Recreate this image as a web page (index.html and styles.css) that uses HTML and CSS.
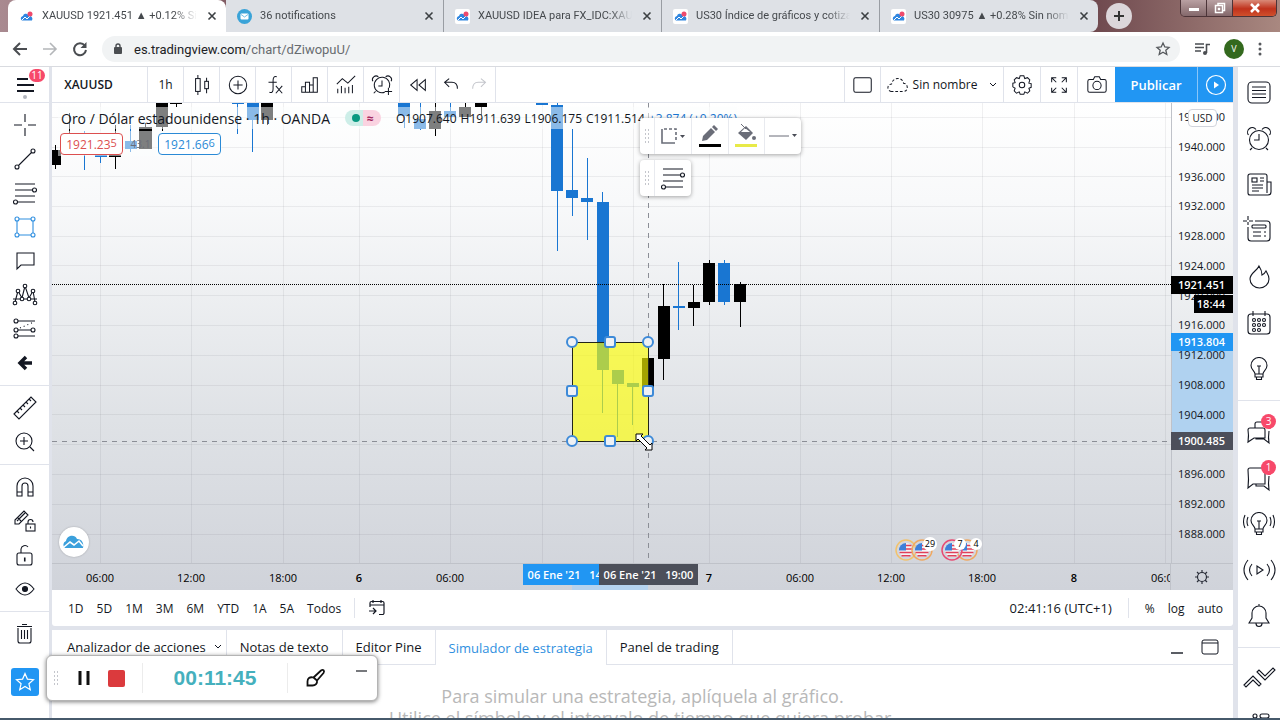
FILE: index.html
```html
<!DOCTYPE html>
<html lang="es">
<head>
    <meta charset="utf-8">
    <title>XAUUSD 1921.451 ▲ +0.12% Sin nombre</title>
    <link rel="stylesheet" href="styles.css">
</head>
<body>
    <!-- shared icons -->
    <svg class="defs" aria-hidden="true">
        <symbol id="tv" viewBox="0 0 15 15">
            <rect width="15" height="15" rx="2" fill="#fff"/>
            <path d="M2 10.500a2.500 2.500 0 0 1 2-3.500 3 3 0 0 1 5-1.500l1 1.500a3 3 0 0 1 3 4.500H3z" fill="#2f86e0"/>
            <path d="M3 11l3-3 2 2 3-3" fill="none" stroke="#fff"/>
            <circle cx="11" cy="5" r="2.500" fill="#ee4a6c"/>
        </symbol>
        <symbol id="close" viewBox="0 0 10 10"><path d="M1.500 1.500l7 7M8.500 1.500l-7 7" stroke="#3c4043" stroke-width="1.600"/></symbol>
        <symbol id="fib" viewBox="0 0 24 24">
            <path d="M2 3h20M2 9h18M2 15h20M4 21h18"/><circle cx="21.500" cy="9" r="2" fill="#fff"/><circle cx="2.500" cy="21" r="2" fill="#fff"/>
        </symbol>
        <symbol id="bulb" viewBox="0 0 24 24">
            <path d="M8 17c0-3-4-4-4-8.500a8 8 0 0 1 16 0c0 4.500-4 5.500-4 8.500zM8 17v3h8v-3M9.500 20v2.500h5V20M10 9h4M12 9v8"/>
        </symbol>
        <symbol id="flag" viewBox="0 0 20 20">
            <circle cx="10" cy="10" r="7" fill="#f4f4f6"/>
            <path d="M10 5.500h5.500M10 9h7M3.500 12.500h13M5.500 15.800h9" stroke="#e0405a" stroke-width="1.600"/>
            <path d="M10 3v7.500H3A7 7 0 0 1 10 3z" fill="#3e7fd8"/>
        </symbol>
    </svg>

    <div class="tabstrip">
        <div class="tab tab-active">
            <svg class="favicon"><use href="#tv"/></svg>
            <span class="tab-title">XAUUSD 1921.451 ▲ +0.12% Sin nombre</span>
            <button class="tab-close" aria-label="Cerrar"><svg width="10" height="10"><use href="#close"/></svg></button>
        </div>
        <div class="tab">
            <svg class="favicon" viewBox="0 0 15 15"><circle cx="7.500" cy="7.500" r="7.500" fill="#3aa3d8"/><rect x="3.500" y="4.500" width="8" height="6" rx="1" fill="#fff"/><path d="M4 5.500l3.500 2.500L11 5.500" fill="none" stroke="#3aa3d8" stroke-width=".7"/></svg>
            <span class="tab-title">36 notifications</span>
            <button class="tab-close" aria-label="Cerrar"><svg width="10" height="10"><use href="#close"/></svg></button>
        </div>
        <div class="tab">
            <svg class="favicon"><use href="#tv"/></svg>
            <span class="tab-title">XAUUSD IDEA para FX_IDC:XAUUSD</span>
            <button class="tab-close" aria-label="Cerrar"><svg width="10" height="10"><use href="#close"/></svg></button>
        </div>
        <div class="tab">
            <svg class="favicon"><use href="#tv"/></svg>
            <span class="tab-title">US30 Índice de gráficos y cotizaciones</span>
            <button class="tab-close" aria-label="Cerrar"><svg width="10" height="10"><use href="#close"/></svg></button>
        </div>
        <div class="tab tab-last">
            <svg class="favicon"><use href="#tv"/></svg>
            <span class="tab-title">US30 30975 ▲ +0.28% Sin nombre</span>
            <button class="tab-close" aria-label="Cerrar"><svg width="10" height="10"><use href="#close"/></svg></button>
        </div>
        <button class="new-tab" aria-label="Nueva pestaña"><svg width="12" height="12"><path d="M6 1v10M1 6h10" stroke="#333" stroke-width="2"/></svg></button>
        <div class="window-controls">
            <button aria-label="Minimizar"><svg width="12" height="12"><rect x="1" y="6" width="10" height="3" fill="#fff"/></svg></button>
            <button aria-label="Restaurar"><svg width="12" height="12" fill="none" stroke="#fff" stroke-width="1.500"><path d="M4 3V1.500h6.500v7H9"/><rect x="1.500" y="3.500" width="7" height="7"/><rect x="4.500" y="6.500" width="1" height="1"/></svg></button>
            <button class="win-close" aria-label="Cerrar"><svg width="12" height="12"><path d="M2 2l8 8M10 2l-8 8" stroke="#fff" stroke-width="2.500"/></svg></button>
        </div>
    </div>

    <div class="addressbar">
        <button aria-label="Atrás"><svg width="16" height="16" fill="none" stroke="#4a4d51" stroke-width="2"><path d="M15 8H3M8 2L2 8l6 6"/></svg></button>
        <button aria-label="Adelante"><svg width="16" height="16" fill="none" stroke="#b4b6b9" stroke-width="1.600"><path d="M1 8h12M8 2l6 6-6 6"/></svg></button>
        <button aria-label="Recargar"><svg width="16" height="16" fill="none" stroke="#4a4d51" stroke-width="2"><path d="M12.800 4.500A6 6 0 1 0 14 9"/><path d="M14.500 1v6h-6z" fill="#4a4d51" stroke="none"/></svg></button>
        <div class="url">
            <svg width="12" height="14"><rect x="2" y="5" width="8" height="7" rx="1" fill="#4a4d51"/><path d="M4 5V4a2 2 0 0 1 4 0v1" fill="none" stroke="#4a4d51" stroke-width="1.400"/></svg>
            <span class="url-text"><b>es.tradingview.com</b>/chart/dZiwopuU/</span>
            <svg width="16" height="16" fill="none" stroke="#55585c" stroke-width="1.300"><path d="M8 2l1.800 4 4.200.4-3.200 2.800 1 4.300L8 11.200l-3.800 2.300 1-4.300L2 6.400 6.200 6z"/></svg>
        </div>
        <svg width="16" height="16" fill="none" stroke="#4a4d51" stroke-width="1.600"><path d="M1 3h9M1 6.500h9M1 10h6M12.500 12V3.500H16"/><circle cx="11" cy="12" r="2" fill="#4a4d51" stroke="none"/></svg>
        <span class="avatar">V</span>
        <svg width="4" height="14" fill="#55585c"><circle cx="2" cy="2" r="1.500"/><circle cx="2" cy="7" r="1.500"/><circle cx="2" cy="12" r="1.500"/></svg>
    </div>

    <div class="app">
        <nav class="rail rail-left">
            <button class="menu" aria-label="Menú">
                <svg class="icon icon-medium" viewBox="0 0 24 24"><path d="M4 6h11M4 12h17M4 18h17"/></svg>
                <span class="badge badge-wide">11</span>
                <i class="menu-dot"></i>
            </button>
            <div class="group">
                <button aria-label="Cursor"><svg class="icon" viewBox="0 0 24 24"><path d="M12 1v8M12 15v8M1 12h8M15 12h8"/></svg></button>
                <button aria-label="Línea de tendencia"><svg class="icon" viewBox="0 0 24 24"><circle cx="4" cy="20" r="2"/><circle cx="20" cy="4" r="2"/><path d="M5.500 18.500l13-13"/></svg></button>
                <button aria-label="Fibonacci"><svg class="icon"><use href="#fib"/></svg></button>
                <button class="selected" aria-label="Rectángulo"><svg class="icon" viewBox="0 0 24 24"><path d="M6 4h12M6 20h12M4 6v12M20 6v12"/><circle cx="4" cy="4" r="2"/><circle cx="20" cy="4" r="2"/><circle cx="4" cy="20" r="2"/><circle cx="20" cy="20" r="2"/></svg></button>
                <button aria-label="Texto"><svg class="icon" viewBox="0 0 24 24"><path d="M4 4h17v12H8l-4 4z"/></svg></button>
                <button aria-label="Patrones"><svg class="icon" viewBox="0 0 24 24"><path d="M0 16h24M2 19l3-11 4 7 3-12 4 12 4-7 2 11"/><g fill="#fff"><circle cx="2" cy="20" r="1.800"/><circle cx="5" cy="8" r="1.800"/><circle cx="9" cy="16" r="1.800"/><circle cx="12" cy="3" r="1.800"/><circle cx="16" cy="16" r="1.800"/><circle cx="20" cy="8" r="1.800"/><circle cx="22" cy="20" r="1.800"/></g></svg></button>
                <button aria-label="Proyección"><svg class="icon" viewBox="0 0 24 24"><path d="M5 4h17M5 13h13M5 19h17"/><path d="M7 11l14-6" stroke-dasharray="1 3"/><circle cx="3" cy="4" r="2"/><circle cx="3" cy="13" r="2"/><circle cx="20" cy="13" r="2"/><circle cx="3" cy="19" r="2"/></svg></button>
                <button aria-label="Iconos"><svg class="icon icon-heavy" viewBox="0 0 24 24"><path d="M19 12H8M13 6l-6 6 6 6"/></svg></button>
            </div>
            <div class="group">
                <button aria-label="Medir"><svg class="icon" viewBox="0 0 24 24"><path d="M1 18L18 1l5 5L6 23zM4 15l2 2M7 12l2 2M10 9l2 2M13 6l2 2M16 3l2 2"/></svg></button>
                <button aria-label="Ampliar"><svg class="icon" viewBox="0 0 24 24"><circle cx="11" cy="11" r="8"/><path d="M17 17l4 4M7 11h8M11 7v8"/></svg></button>
            </div>
            <div class="group">
                <button aria-label="Imán"><svg class="icon" viewBox="0 0 24 24"><path d="M4 21V11a8 8 0 0 1 16 0v10h-5V11a3 3 0 0 0-6 0v10zM4 17h5M15 17h5"/></svg></button>
                <button aria-label="Modo dibujo"><svg class="icon" viewBox="0 0 24 24"><path d="M2 11l9-9 4 4-9 9H2zM5 9l3 3M4 12l8-8"/><rect x="13" y="15" width="9" height="7"/><path d="M15 15v-2a2.500 2.500 0 0 1 5 0M17.500 17.500v2"/></svg></button>
                <button aria-label="Bloquear"><svg class="icon" viewBox="0 0 24 24"><rect x="4" y="10" width="15" height="12" rx="2"/><path d="M8 10V6a4 4 0 0 1 7-2M11.500 14.500v4M12 14.500v4"/></svg></button>
                <button aria-label="Ocultar"><svg class="icon" viewBox="0 0 24 24"><path d="M3 12q9-12 18 0-9 12-18 0z"/><circle cx="12" cy="12" r="2.500" fill="#131722"/></svg></button>
            </div>
            <div class="group">
                <button aria-label="Eliminar"><svg class="icon" viewBox="0 0 24 24"><path d="M5 6v13a2 2 0 0 0 2 2h9a2 2 0 0 0 2-2V6M4 4.500h15M9 2.500h5M8.500 8v9M11.500 8v9M14.500 8v9"/></svg></button>
            </div>
            <button class="favorite" aria-label="Favoritos"><svg width="20" height="20" fill="none" stroke="#fff" stroke-width="1.200"><path d="M10 1.500l2.400 5.600 6.100.6-4.600 4 1.400 6L10 14.500l-5.300 3.200 1.400-6-4.600-4 6.100-.6z"/></svg></button>
        </nav>

        <main class="center">
            <header class="toolbar">
                <button class="symbol">XAUUSD</button>
                <button class="tool">1h</button>
                <button class="tool" aria-label="Velas"><svg class="icon" viewBox="0 0 24 24"><rect x="5" y="5" width="5" height="14"/><path d="M7.500 1v4M7.500 19v4M17 4v4M17 16v5"/><rect x="15" y="8" width="4" height="8"/></svg></button>
                <button class="tool" aria-label="Comparar"><svg class="icon" viewBox="0 0 24 24"><circle cx="12" cy="12" r="9.500"/><path d="M12 7v10M7 12h10"/></svg></button>
                <button class="tool" aria-label="Indicadores"><svg class="icon" viewBox="0 0 24 24"><path d="M15 3c-3-1-4 1-4 4v9c0 3-1 5-4 4M6 9h9M14 13l7 8M21 13l-7 8"/></svg></button>
                <button class="tool" aria-label="Finanzas"><svg class="icon" viewBox="0 0 24 24"><path d="M3 14h4v6H3zM7 9h4.500v11H7zM11.500 12h4v8h-4zM15.500 4H20v16h-4.500z"/></svg></button>
                <button class="tool" aria-label="Plantillas"><svg class="icon" viewBox="0 0 24 24"><path d="M2 11l6-6 6 5 8-8M3 16v5M7 13v8M11 15v6M15 14v7M19 12v9"/></svg></button>
                <button class="tool" aria-label="Alerta"><svg class="icon" viewBox="0 0 24 24"><path d="M15 20a8.500 8.500 0 1 1 5-5M12 7v6H8M2 8a4 4 0 0 1 6-5M16 3a4 4 0 0 1 6 5M19 15v8M15 19h8M5 19l-2 2"/></svg></button>
                <button class="tool" aria-label="Repetición"><svg class="icon" viewBox="0 0 24 24"><path d="M11 6v12l-7-6zM20 6v12l-7-6z"/></svg></button>
                <div class="undo">
                    <button aria-label="Deshacer"><svg class="icon" viewBox="0 0 24 24"><path d="M10 5L5 9l5 5M5 9h8c4 0 6 3 6 7"/></svg></button>
                    <button class="disabled" aria-label="Rehacer"><svg class="icon" viewBox="0 0 24 24"><path d="M13 5l5 4-5 5M18 9h-8c-4 0-6 3-6 7"/></svg></button>
                </div>
                <span class="spacer"></span>
                <button class="tool" aria-label="Diseño"><svg class="icon" viewBox="0 0 24 24"><rect x="2" y="4" width="19" height="16" rx="2"/></svg></button>
                <button class="layout-name"><svg class="icon" viewBox="0 0 24 24" stroke-dasharray="3 2"><path d="M5 19a4 4 0 0 1 0-8c1-8 12-8 13-1 5 0 6 9 0 9z"/></svg>Sin nombre<svg width="8" height="6" fill="none" stroke="#131722"><path d="M1 1l3 3 3-3"/></svg></button>
                <button class="tool" aria-label="Configuración"><svg class="icon" viewBox="0 0 24 24"><path d="M10 2h4l1 3 3-1 2.500 2.500L19.500 10l2.500.5v4l-2.500 1 1 3L18 21l-3-1.500-1 2.500h-4l-1-2.500L6 21l-2.500-2.500 1-3L2 14v-4l2.500-.5-1-3L6 4l3 1z"/><circle cx="12" cy="12" r="3"/></svg></button>
                <button class="tool" aria-label="Pantalla completa"><svg class="icon" viewBox="0 0 24 24"><path d="M9 9L4 4M4 9V4h5M15 9l5-5M15 4h5v5M9 15l-5 5M4 15v5h5M15 15l5 5M20 15v5h-5"/></svg></button>
                <button class="tool tool-flat" aria-label="Captura"><svg class="icon" viewBox="0 0 24 24"><path d="M4 6h4l1.500-3h5L16 6h4a2 2 0 0 1 2 2v10a2 2 0 0 1-2 2H4a2 2 0 0 1-2-2V8a2 2 0 0 1 2-2z"/><circle cx="12" cy="12.500" r="4.500"/></svg></button>
                <button class="publish">Publicar</button>
                <button class="stream" aria-label="Emitir"><svg width="22" height="22"><circle cx="11" cy="11" r="9.500" fill="none" stroke="#fff" stroke-width="1.200"/><path d="M9 7.500v7l5-3.500z" fill="#fff"/></svg></button>
            </header>

            <section class="chart">
                <div class="plot">
                    <svg class="canvas">
                        <path class="grid" d="M48 0v461M139 0v461M231 0v461M307 0v461M398 0v461M490 0v461M581 0v461M657 0v461M748 0v461M839 0v461M930 0v461M1022 0v461M1113 0v461"/>
                        <path class="grid" d="M0 14h1119M0 44h1119M0 73h1119M0 103h1119M0 133h1119M0 162h1119M0 192h1119M0 222h1119M0 252h1119M0 282h1119M0 311h1119M0 341h1119M0 371h1119M0 401h1119M0 431h1119"/>

                        <!-- wicks -->
                        <path class="wick up" d="M3 42v24M17 10v30M63 22v44M93 20v10M110 0v28M124 0v4M215 0v22M383 0v33M413 0v14M429 0v12M596 255v28M611 181v96M641 182v41M657 157v45M688 179v45"/>
                        <path class="wick down" d="M32 28v39M48 50v10M78 22v27M185 0v31M200 0v49M352 0v25M368 0v27M398 0v14M505 0v148M520 26v87M535 55v82M550 89v221M565 267v67M580 280v42M626 159v68M672 157v45"/>
                        <!-- bodies -->
                        <path class="body up" d="M0 47h9v15H0zM57 52h12v2H57zM87 24h13v22H87zM104 0h12v24h-12zM118 0h12v1h-12zM209 0h12v17h-12zM377 8h12v18h-12zM407 4h12v10h-12zM423 0h12v4h-12zM590 255h12v31h-12zM606 203h12v53h-12zM636 199h12v6h-12zM651 160h12v39h-12zM682 181h12v18h-12z"/>
                        <path class="body down" d="M43 52h12v2H43zM73 38h12v8H73zM180 0h12v1h-12zM195 0h12v17h-12zM346 0h12v13h-12zM362 16h12v10h-12zM392 8h12v6h-12zM484 0h12v2h-12zM499 2h12v86h-12zM514 87h12v8h-12zM529 95h12v4h-12zM545 99h12v168h-12zM560 267h12v14h-12zM575 280h12v4h-12zM621 203h12v2h-12zM666 160h12v39h-12z"/>

                        <!-- last price and crosshair -->
                        <path class="last-price" d="M0 181h1119"/>
                        <path class="cross" d="M0 338h1119M596 0v461"/>

                        <!-- selected rectangle -->
                        <rect class="zone" x="520" y="239" width="76" height="99"/>
                        <g class="handles">
                            <rect x="553" y="234" width="10" height="10" rx="2"/><rect x="553" y="333" width="10" height="10" rx="2"/>
                            <rect x="515" y="283" width="10" height="10" rx="2"/><rect x="591" y="283" width="10" height="10" rx="2"/>
                            <circle cx="520" cy="239" r="5"/><circle cx="596" cy="239" r="5"/><circle cx="520" cy="338" r="5"/><circle cx="596" cy="338" r="5"/>
                        </g>
                        <path class="pointer" d="M584 331h7l-2 2 9 9 2-2v7h-7l2-2-9-9-2 2z"/>

                        <!-- economic events -->
                        <g fill="none" stroke-width="1.500">
                            <use href="#flag" x="844" y="437" width="20" height="20"/><circle cx="854" cy="447" r="10" stroke="#f2c26c"/>
                            <use href="#flag" x="860" y="437" width="20" height="20"/><circle cx="870" cy="447" r="10" stroke="#f0a860"/>
                            <use href="#flag" x="905" y="437" width="20" height="20"/><circle cx="915" cy="447" r="10" stroke="#f0a860"/>
                            <use href="#flag" x="890" y="437" width="20" height="20"/><circle cx="900" cy="447" r="10" stroke="#e84a72"/>
                        </g>
                        <g fill="#fff"><circle cx="878" cy="441" r="7"/><circle cx="908" cy="441" r="6"/><circle cx="924" cy="441" r="6"/></g>
                        <g class="event-count"><text x="878" y="444">29</text><text x="908" y="444">7</text><text x="924" y="444">4</text></g>
                    </svg>

                    <div class="legend">
                        <div class="legend-title">
                            <span class="name">Oro / Dólar estadounidense · 1h · OANDA</span>
                            <span class="status"><i></i><b>≈</b></span>
                            <span class="ohlc"><span>O1907.640</span><span>H1911.639</span><span>L1906.175</span><span>C1911.514</span><span class="change">+3.874 (+0.20%)</span></span>
                        </div>
                        <div class="quotes">
                            <button class="quote sell">1921.23<sup>5</sup></button>
                            <span class="spread">43.1</span>
                            <button class="quote buy">1921.66<sup>6</sup></button>
                        </div>
                    </div>

                    <div class="floating">
                        <div class="float-bar">
                            <span class="grip"></span>
                            <button aria-label="Plantilla"><svg width="28" height="20" fill="none" stroke="#6a6d78" stroke-width="1.600"><path d="M3 3v14h13"/><path d="M5 3h12v13" stroke-dasharray="3 2"/><path d="M21 9h5l-2.500 3z" fill="#4a4d57" stroke="none"/></svg></button>
                            <button aria-label="Color de línea"><svg width="24" height="24"><path d="M4 17l1-5 8-8 4 4-8 8zM14 3l2-2 4 4-2 2z" fill="#6a6d78"/><path d="M1 20h22v3H1z"/></svg></button>
                            <button aria-label="Color de fondo"><svg width="24" height="24"><path d="M4 9l8-7 7 7-7 7z" fill="#6a6d78"/><path d="M7 8l4-4 5 4z" fill="#fff"/><path d="M7 0l5 5" stroke="#6a6d78"/><circle cx="20" cy="14" r="2" fill="#6a6d78"/><path d="M1 20h22v3H1z" fill="#e8ea48"/></svg></button>
                            <button aria-label="Grosor"><svg width="30" height="20"><path d="M1 10h20" stroke="#6a6d78"/><path d="M24 8h5l-2.500 3z" fill="#4a4d57"/></svg></button>
                        </div>
                        <div class="float-bar float-small">
                            <span class="grip"></span>
                            <button aria-label="Fibonacci"><svg class="icon"><use href="#fib"/></svg></button>
                        </div>
                    </div>

                    <button class="cloud" aria-label="TradingView"><svg width="22" height="16"><path d="M2 14a4 4 0 0 1 1-7c1-6 9-7 11-2 5 0 7 4 6 9z" fill="#3ba0dc"/><path d="M1 13l6-5 4 3 5-4 4 5" fill="none" stroke="#fff" stroke-width="1.600"/></svg></button>
                </div>

                <div class="price-axis">
                    <span class="range-shade"></span>
                    <ul class="prices">
                        <li>1944.000</li><li>1940.000</li><li>1936.000</li><li>1932.000</li><li>1928.000</li>
                        <li>1924.000</li><li>1920.000</li><li>1916.000</li><li>1912.000</li><li>1908.000</li>
                        <li>1904.000</li><li></li><li>1896.000</li><li>1892.000</li><li>1888.000</li>
                    </ul>
                    <button class="currency">USD</button>
                    <span class="tag tag-last">1921.451</span>
                    <span class="tag tag-timer">18:44</span>
                    <span class="tag tag-top">1913.804</span>
                    <span class="tag tag-cross">1900.485</span>
                </div>

                <div class="time-axis">
                    <svg class="canvas">
                        <rect x="520" y="0" width="76" height="26" fill="#b5d2ee"/>
                        <g class="times">
                            <text x="48" y="18">06:00</text><text x="139" y="18">12:00</text><text x="231" y="18">18:00</text>
                            <text class="day" x="307" y="18">6</text><text x="398" y="18">06:00</text><text class="day" x="657" y="18">7</text>
                            <text x="748" y="18">06:00</text><text x="839" y="18">12:00</text><text x="930" y="18">18:00</text>
                            <text class="day" x="1022" y="18">8</text><text x="1113" y="18">06:00</text>
                        </g>
                    </svg>
                    <span class="time-tag time-start">06 Ene '21 &nbsp; 14:00</span>
                    <span class="time-tag time-cross">06 Ene '21 &nbsp; 19:00</span>
                </div>
                <button class="axis-settings" aria-label="Ajustes del eje"><svg width="16" height="16" fill="none" stroke="#2a2e39" stroke-width="1.200"><circle cx="8" cy="8" r="4.500"/><path d="M8 1v2.500M8 12.500V15M1 8h2.500M12.500 8H15M3 3l2 2M11 11l2 2M3 13l2-2M11 5l2-2"/></svg></button>
            </section>

            <div class="rangebar">
                <button>1D</button><button>5D</button><button>1M</button><button>3M</button><button>6M</button><button>YTD</button><button>1A</button><button>5A</button><button>Todos</button>
                <i class="divider"></i>
                <button class="goto" aria-label="Ir a"><svg width="18" height="18" fill="none" stroke="#131722" stroke-width="1.200"><path d="M2 8V4a1.500 1.500 0 0 1 1.500-1.500h11A1.500 1.500 0 0 1 16 4v10a1.500 1.500 0 0 1-1.500 1.500H11M2 6h14M5 1v3M13 1v3M1 12h7M5 9l3 3-3 3"/></svg></button>
                <span class="spacer"></span>
                <button class="clock">02:41:16 (UTC+1)</button>
                <i class="divider"></i>
                <button>%</button><button>log</button><button>auto</button>
            </div>

            <section class="panel">
                <div class="panel-tabs">
                    <button>Analizador de acciones<svg width="8" height="6" fill="none" stroke="#131722"><path d="M1 1l3 3 3-3"/></svg></button>
                    <button>Notas de texto</button>
                    <button>Editor Pine</button>
                    <button class="current">Simulador de estrategia</button>
                    <button>Panel de trading</button>
                    <div class="panel-actions">
                        <button aria-label="Minimizar panel"><svg width="14" height="16"><path d="M1 14h12" stroke="#131722" stroke-width="1.400"/></svg></button>
                        <button aria-label="Maximizar panel"><svg width="18" height="16" fill="none" stroke="#131722"><rect x="1" y="1" width="16" height="14" rx="2"/><path d="M1 4h16"/></svg></button>
                    </div>
                </div>
                <p class="empty">Para simular una estrategia, aplíquela al gráfico.<br>Utilice el símbolo y el intervalo de tiempo que quiera probar.</p>
            </section>
        </main>

        <aside class="rail rail-right">
            <div class="group">
                <button aria-label="Lista"><svg class="icon" viewBox="0 0 24 24"><rect x="1" y="1" width="22" height="21" rx="4"/><path d="M5 6h14M5 9.500h14M5 13h14M5 16.500h14"/></svg></button>
                <button aria-label="Alertas"><svg class="icon" viewBox="0 0 24 24"><circle cx="12" cy="13" r="9.500"/><path d="M12 7v6H7M1.500 8A4.500 4.500 0 0 1 9 2.500M15 2.500A4.500 4.500 0 0 1 22.500 8M5 21l-2 2M19 21l2 2"/></svg></button>
                <button aria-label="Noticias"><svg class="icon" viewBox="0 0 24 24"><path d="M20 20V3a2 2 0 0 0-2-2H3a2 2 0 0 0-2 2v17a2 2 0 0 0 2 2h18a3 3 0 0 0 3-3V9h-4M5 15h11M5 18h7M5 12h11M13 5h4M13 8h4"/><rect x="5" y="5" width="5" height="4"/></svg></button>
                <button aria-label="Ventana de datos"><svg class="icon" viewBox="0 0 24 24"><path d="M8 2h12a3 3 0 0 1 3 3v14a3 3 0 0 1-3 3H4a3 3 0 0 1-3-3V8M1-3v4M1 3v3M-4 2h4M2 2h4M6 13h8M6 17h8M17 13h2M17 17h2"/><rect x="5" y="6" width="14" height="3" rx="1"/></svg></button>
                <button aria-label="Populares"><svg class="icon" viewBox="0 0 24 24"><path d="M12 1c-2 5-9 7-9 13a9.500 9 0 0 0 19 0c0-4-2-6-3-8-1 2-2 3-4 4 0-4-1-6-3-9z"/></svg></button>
                <button aria-label="Calendario"><svg class="icon" viewBox="0 0 24 24"><rect x="1" y="3" width="22" height="20" rx="3"/><path d="M6 0v5M18 0v5"/><g><circle cx="7" cy="9" r="1.500"/><circle cx="12" cy="9" r="1.500"/><circle cx="17" cy="9" r="1.500"/><circle cx="7" cy="14" r="1.500"/><circle cx="12" cy="14" r="1.500"/><circle cx="17" cy="14" r="1.500"/><circle cx="7" cy="19" r="1.500"/><circle cx="12" cy="19" r="1.500"/></g></svg></button>
                <button aria-label="Ideas"><svg class="icon"><use href="#bulb"/></svg></button>
            </div>
            <div class="group">
                <button aria-label="Chats públicos"><svg class="icon" viewBox="0 0 24 24"><path d="M3 8h13q2 0 2 2v8H7l-6 4q1-7 0-12 0-2 2-2zM8 8V4q0-2 2-2h8M22 11q-1 7 0 12l-5-4H9v-1"/></svg><span class="badge">3</span></button>
                <button aria-label="Chats privados"><svg class="icon" viewBox="0 0 24 24"><path d="M3 2h13q2 0 2 2v14H6l-5 4q1-8 0-18 0-2 2-2zM22 10q-1 8 0 14l-5-4H9v-2"/></svg><span class="badge">1</span></button>
                <button aria-label="Flujo de ideas"><svg class="icon icon-wide" viewBox="-4 0 32 24"><use href="#bulb" width="24" height="24"/><path d="M1 5q-2 5 0 9M-2 3q-3 7 0 13M23 5q2 5 0 9M26 3q3 7 0 13"/></svg></button>
                <button aria-label="Emisiones"><svg class="icon icon-wide" viewBox="-4 0 32 24"><path d="M10 8v8l6-4zM5 6q-5 6 0 12M1 2q-8 10 0 20M20 6q5 6 0 12M24 2q8 10 0 20"/></svg></button>
                <button aria-label="Notificaciones"><svg class="icon" viewBox="0 0 24 24"><path d="M2 19l3-5V9a7 7 0 0 1 14 0v5l3 5zM9 19.500a3 3 0 0 0 6 0M12 2V0"/></svg></button>
            </div>
            <div class="group">
                <button aria-label="Órdenes"><svg class="icon icon-wide" viewBox="-4 0 32 24"><path d="M-3 18l9-9 8 8-2 2-6-6-7 7zM10 5l2-2 6 6 8-8 2 2-10 10z"/></svg></button>
                <button aria-label="Profundidad"><svg class="icon" viewBox="0 0 24 24"><circle cx="8" cy="3" r="2"/><rect x="13" y="1" width="9" height="4" rx="2"/><path d="M8 8v8M17 8v8"/></svg></button>
            </div>
        </aside>
    </div>

    <div class="recorder">
        <span class="grip"></span>
        <button class="pause" aria-label="Pausa"><svg width="14" height="18"><path d="M3 2v14M11 2v14" stroke="#111" stroke-width="3"/></svg></button>
        <button class="stop" aria-label="Detener"></button>
        <span class="elapsed">00:11:45</span>
        <button class="brush" aria-label="Dibujar"><svg width="20" height="20" fill="none" stroke="#111" stroke-width="1.800"><path d="M7.500 9.500L15 2.500c2-1.500 4 0 2.500 2.500L11 12.500zM7.500 9.500c-4-1-6 1-6 4v4h5c3 0 5-2 4.500-5z"/></svg></button>
        <button class="collapse" aria-label="Contraer"></button>
    </div>
</body>
</html>
```
FILE: styles.css
```css
* {
    box-sizing: border-box;
}
body {
    display: flex;
    flex-direction: column;
    height: 100vh;
    margin: 0;
    overflow: hidden;
    border-bottom: 2px solid #46596b;
    background: #fff;
    color: #131722;
    font-family: "Open Sans", "Noto Sans", sans-serif;
    font-size: 12px;
}
button {
    display: flex;
    align-items: center;
    justify-content: center;
    flex: none;
    margin: 0;
    padding: 0;
    border: 0;
    background: none;
    color: inherit;
    font: inherit;
    white-space: nowrap;
}
svg {
    flex: none;
    display: block;
}
.defs {
    position: absolute;
    width: 0;
    height: 0;
}
.icon {
    width: 24px;
    height: 24px;
    fill: none;
    stroke: #131722;
    stroke-width: 1.1;
    overflow: visible;
}
.icon-medium {
    stroke-width: 2;
}
.icon-heavy {
    stroke-width: 3.5;
}
.icon-wide {
    width: 32px;
}
.spacer {
    flex: 1;
}

/* browser */
.tabstrip {
    display: flex;
    flex: none;
    height: 32px;
    padding-left: 8px;
    background: linear-gradient(90deg, #a98a90, #7c565e 20%, #6d474d 85%, #a98880);
}
.tab {
    display: flex;
    align-items: center;
    flex: 0 1 218px;
    min-width: 0;
    padding: 0 9px 0 11px;
    background: #dee1e6;
    border-right: 1px solid #999da3;
}
.tab-active {
    background: #fff;
    border-radius: 8px 8px 0 0;
    border-right: 0;
}
.tab-last {
    border-right: 0;
    border-radius: 0 8px 8px 0;
}
.favicon {
    width: 15px;
    height: 15px;
    margin-right: 8px;
}
.tab-title {
    flex: 1;
    overflow: hidden;
    color: #45494d;
    font-family: Roboto, sans-serif;
    font-size: 11px;
    line-height: 16px;
    white-space: nowrap;
    -webkit-mask-image: linear-gradient(90deg, #000 85%, transparent);
    mask-image: linear-gradient(90deg, #000 85%, transparent);
}
.tab-close {
    margin-left: 10px;
}
.new-tab {
    width: 26px;
    height: 26px;
    margin: 3px 0 0 8px;
    border-radius: 50%;
    background: #dcd6da;
}
.window-controls {
    display: flex;
    height: 17px;
    margin: 0 3px 0 auto;
    border: 1px solid #4c3438;
    border-top: 0;
    border-radius: 0 0 5px 5px;
    overflow: hidden;
}
.window-controls button {
    width: 26px;
    background: linear-gradient(#b9a0a2, #84686b);
    border-right: 1px solid #4c3438;
}
.window-controls .win-close {
    width: 43px;
    border: 0;
    background: linear-gradient(#d98a78, #c0321c 55%, #d0502c);
}
.addressbar {
    display: flex;
    align-items: center;
    flex: none;
    gap: 14px;
    height: 35px;
    padding: 0 18px 0 12px;
    border-bottom: 1px solid #d9dbe0;
    background: #fff;
}
.url {
    display: flex;
    align-items: center;
    flex: 1;
    gap: 10px;
    height: 26px;
    padding: 0 9px 0 10px;
    border-radius: 13px;
    background: #f1f3f4;
}
.url-text {
    flex: 1;
    color: #686c70;
    font-family: Roboto, sans-serif;
    font-size: 13px;
}
.url-text b {
    color: #202124;
    font-weight: 400;
}
.avatar {
    width: 20px;
    height: 20px;
    border-radius: 50%;
    background: #33691e;
    color: #fff;
    font-size: 9px;
    line-height: 20px;
    text-align: center;
}

/* side rails */
.app {
    display: flex;
    flex: 1;
    min-height: 0;
    background: #e0e3eb;
}
.rail {
    display: flex;
    flex-direction: column;
    flex: none;
    overflow: hidden;
    background: #fff;
}
.rail button {
    position: relative;
}
.group {
    padding: 5px 0;
    border-bottom: 1px solid #e0e3eb;
}
.rail-left {
    width: 49px;
    margin-right: 3px;
}
.rail-left .menu {
    height: 36px;
    border-bottom: 1px solid #e0e3eb;
}
.rail-left .group button {
    width: 100%;
    height: 34px;
}
.rail-left .group:last-of-type {
    border: 0;
}
.menu-dot {
    position: absolute;
    left: 23px;
    bottom: 3px;
    width: 4px;
    height: 4px;
    border-radius: 50%;
    background: #b2b5be;
}
.selected .icon {
    stroke: #2f8fe0;
}
.favorite {
    align-self: center;
    width: 28px;
    height: 28px;
    margin-top: 12px;
    border-radius: 3px;
    background: #2196f3;
}
.badge {
    position: absolute;
    top: 5px;
    right: 4px;
    min-width: 15px;
    height: 15px;
    border-radius: 8px;
    background: #f7496a;
    color: #fff;
    font-size: 10px;
    line-height: 15px;
    text-align: center;
}
.badge-wide {
    top: 2px;
    min-width: 16px;
    height: 13px;
    line-height: 13px;
}
.rail-right {
    width: 42px;
    margin-left: 5px;
}
.rail-right .group {
    padding: 3px 0 8px;
}
.rail-right .group + .group {
    padding-top: 8px;
}
.rail-right .group button {
    width: 100%;
    height: 46px;
}

/* chart column */
.center {
    display: flex;
    flex-direction: column;
    flex: 1;
    min-width: 0;
}
.toolbar {
    display: flex;
    flex: none;
    height: 36px;
    border-bottom: 1px solid #e0e3eb;
    background: #fff;
}
.symbol {
    width: 96px;
    padding-right: 22px;
    border-right: 1px solid #e0e3eb;
    font-weight: 600;
}
.tool {
    width: 36px;
    border-right: 1px solid #e0e3eb;
}
.tool-flat {
    border: 0;
}
.spacer ~ .tool {
    width: 37px;
}
.undo {
    display: flex;
    width: 60px;
    border-right: 1px solid #e0e3eb;
}
.undo button {
    flex: 1;
}
.disabled .icon {
    stroke: #c3c5cb;
}
.toolbar .icon {
    width: 22px;
    height: 22px;
}
.spacer + .tool {
    border-left: 1px solid #e0e3eb;
}
.layout-name {
    gap: 4px;
    width: 123px;
    border-right: 1px solid #e0e3eb;
}
.layout-name svg:last-child {
    margin-left: 8px;
}
.publish {
    width: 82px;
    background: #2196f3;
    color: #fff;
    font-size: 13px;
    font-weight: 600;
}
.stream {
    width: 36px;
    border-left: 1px solid #8ac6f9;
    background: #2196f3;
}
.chart {
    display: grid;
    grid-template-columns: 1fr 62px;
    grid-template-rows: 1fr 26px;
    flex: 1;
    min-height: 0;
    background: linear-gradient(#fff, #f8f9fa 20%, #dfe2e6 65%, #d0d3da);
}
.plot {
    position: relative;
    min-width: 0;
    overflow: hidden;
    border-bottom: 1px solid #bfc2c9;
}
.canvas {
    width: 100%;
    height: 100%;
    shape-rendering: crispEdges;
}
.canvas circle,
.canvas use,
.handles,
.pointer {
    shape-rendering: auto;
}
.grid {
    stroke: #2a2e39;
    stroke-opacity: .07;
}
.wick {
    stroke-width: 1;
}
.wick.up {
    stroke: #000;
}
.wick.down {
    stroke: #1976d2;
}
.body.up {
    fill: #000;
}
.body.down {
    fill: #1976d2;
}
.last-price {
    stroke: #000;
    stroke-dasharray: 1 1;
}
.cross {
    stroke: #8b8e96;
    stroke-dasharray: 5 5;
}
.zone {
    fill: #ffff00;
    fill-opacity: .64;
    stroke: #22251a;
}
.handles {
    fill: #eef1f4;
    stroke: #3d8ad8;
    stroke-width: 2;
}
.pointer {
    fill: #fff;
    stroke: #000;
}
.event-count {
    font-size: 9px;
    text-anchor: middle;
}
.legend {
    position: absolute;
    top: 4px;
    left: 6px;
}
.legend-title {
    display: flex;
    align-items: center;
    height: 22px;
    padding-left: 3px;
    background: rgba(252, 253, 253, .5);
    white-space: nowrap;
}
.name {
    font-size: 14px;
}
.status {
    display: flex;
    align-items: center;
    justify-content: space-evenly;
    width: 36px;
    height: 16px;
    margin: 0 15px;
    border-radius: 8px;
    background: linear-gradient(90deg, #cdeee8 50%, #fad3e1 50%);
    color: #a2245c;
}
.status i {
    width: 8px;
    height: 8px;
    border-radius: 50%;
    background: #089981;
}
.ohlc {
    display: flex;
    gap: 4px;
    font-size: 12px;
}
.change {
    color: #1976d2;
}
.quotes {
    display: flex;
    align-items: center;
    width: 164px;
    height: 25px;
    margin-top: 2px;
    padding-left: 2px;
    background: rgba(252, 253, 253, .5);
}
.quote {
    align-items: baseline;
    width: 63px;
    height: 22px;
    padding-top: 2px;
    border: 1px solid;
    border-radius: 4px;
    background: #fff;
}
.quote sup {
    align-self: flex-start;
    padding-top: 1px;
    font-size: 11px;
    line-height: 11px;
}
.sell {
    color: #dc4f4f;
}
.buy {
    color: #2b8ad6;
}
.spread {
    width: 35px;
    color: #6a6d78;
    font-size: 10px;
    text-align: center;
}
.floating {
    position: absolute;
    top: 15px;
    left: 588px;
}
.float-bar {
    display: flex;
    width: 161px;
    height: 36px;
    border-radius: 4px;
    background: #fff;
    box-shadow: 0 1px 4px rgba(0, 0, 0, .35);
}
.float-bar button {
    flex: 1;
    border-left: 1px solid #e8eaef;
}
.float-small {
    width: 51px;
    margin-top: 6px;
}
.grip {
    align-self: center;
    flex: none;
    width: 6px;
    height: 16px;
    margin: 0 4px;
    background: radial-gradient(#c4c6cc 1px, transparent 1px) 0 0 / 3px 4px;
}
.cloud {
    position: absolute;
    left: 7px;
    bottom: 6px;
    width: 30px;
    height: 30px;
    border-radius: 50%;
    background: #fff;
    box-shadow: 0 0 2px rgba(0, 0, 0, .25);
}
.price-axis {
    position: relative;
    border-left: 1px solid #bfc2c9;
    border-bottom: 1px solid #bfc2c9;
}
.prices {
    position: relative;
    display: flex;
    flex-direction: column;
    justify-content: space-between;
    height: 100%;
    margin: 0;
    padding: 6px 8px 21px 0;
    font-size: 11px;
    line-height: 16px;
    list-style: none;
    text-align: right;
}
.prices li {
    height: 16px;
}
.range-shade {
    position: absolute;
    top: 239px;
    left: 0;
    width: 100%;
    height: 99px;
    background: #b0d2f0;
}
.currency {
    position: absolute;
    top: 6px;
    left: 16px;
    width: 29px;
    height: 18px;
    border: 1px solid #d1d4dc;
    border-radius: 4px;
    background: #fff;
    font-size: 10px;
}
.tag {
    position: absolute;
    right: 0;
    width: 62px;
    height: 18px;
    padding-right: 8px;
    background: #000;
    color: #fff;
    font-size: 11px;
    font-weight: 600;
    line-height: 18px;
    text-align: right;
}
.tag-last {
    top: 173px;
}
.tag-timer {
    top: 192px;
    width: 39px;
}
.tag-top {
    top: 230px;
    background: #2196f3;
}
.tag-cross {
    top: 329px;
    background: #4c4f5a;
}
.time-axis {
    position: relative;
    min-width: 0;
    overflow: hidden;
    border-right: 1px solid #bfc2c9;
}
.times {
    font-size: 11px;
    text-anchor: middle;
}
.day {
    font-weight: 600;
}
.time-tag {
    position: absolute;
    top: 0;
    width: 99px;
    height: 21px;
    color: #fff;
    font-size: 11px;
    font-weight: 600;
    line-height: 22px;
    text-align: center;
    white-space: nowrap;
}
.time-start {
    left: 471px;
    background: #2196f3;
}
.time-cross {
    left: 547px;
    background: #4c4f5a;
}

/* range bar and bottom panel */
.rangebar {
    display: flex;
    align-items: center;
    flex: none;
    gap: 13px;
    height: 36px;
    padding: 0 10px 0 16px;
    border-radius: 0 0 3px 3px;
    background: #fff;
}
.divider {
    width: 1px;
    height: 20px;
    background: #e0e3eb;
}
.clock {
    font-size: 13px;
}
.clock + .divider {
    margin: 0 3px;
}
.panel {
    flex: none;
    height: 88px;
    margin-top: 4px;
    overflow: hidden;
    background: #fff;
}
.panel-tabs {
    display: flex;
    height: 35px;
    border-bottom: 1px solid #e0e3eb;
    font-size: 13px;
}
.panel-tabs > button {
    gap: 8px;
    padding: 0 13px;
    border-right: 1px solid #e0e3eb;
}
.panel-tabs > button:first-child {
    padding: 0 4px 0 15px;
}
.panel-tabs > .current {
    margin-bottom: -1px;
    background: #fff;
    color: #2f8fe0;
}
.panel-actions {
    display: flex;
    gap: 17px;
    margin: 0 14px 0 auto;
}
.empty {
    margin: 20px 0 0;
    color: #b8b8b8;
    font-size: 18px;
    line-height: 22px;
    text-align: center;
}

/* screen recorder overlay */
.recorder {
    position: absolute;
    left: 46px;
    bottom: 19px;
    display: flex;
    align-items: center;
    width: 332px;
    height: 46px;
    padding-left: 2px;
    border: 1px solid #b4b4b4;
    border-radius: 6px;
    background: #fff;
    box-shadow: 0 1px 4px rgba(0, 0, 0, .5);
}
.pause {
    margin-left: 14px;
}
.stop {
    width: 17px;
    height: 17px;
    margin: 0 17px 0 17px;
    border-radius: 2px;
    background: #db3a3d;
}
.elapsed {
    width: 146px;
    border: solid #ececec;
    border-width: 0 1px;
    color: #45b0bd;
    font-family: "Liberation Sans", sans-serif;
    font-size: 21px;
    font-weight: 700;
    line-height: 30px;
    text-align: center;
}
.brush {
    margin-left: 18px;
}
.collapse {
    width: 11px;
    height: 2px;
    margin: -14px 10px 0 auto;
    background: #77797d;
}
```
